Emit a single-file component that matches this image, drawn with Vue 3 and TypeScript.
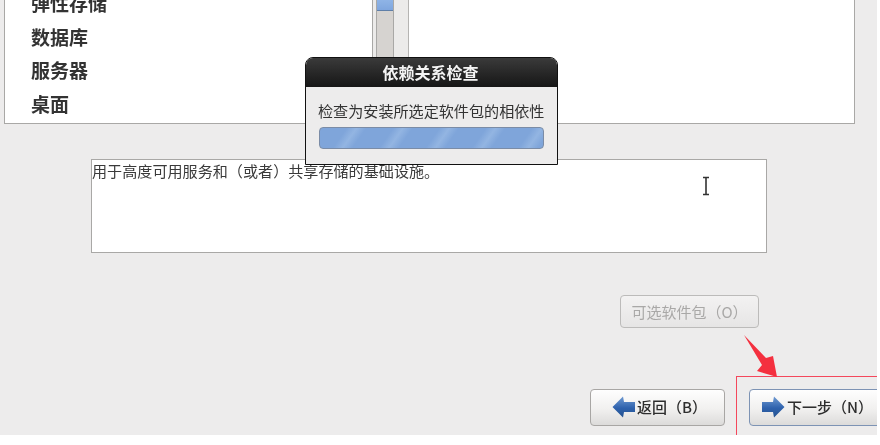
<script setup lang="ts">
const groups: string[] = ['弹性存储', '数据库', '服务器', '桌面']
</script>

<template>
  <div class="page">
    <div class="stage">
      <section class="browser">
        <ul class="groups">
          <li v-for="g in groups" :key="g" class="group">{{ g }}</li>
        </ul>
        <div class="scrollbar">
          <div class="gutter"></div>
          <div class="trough"><div class="thumb"></div></div>
        </div>
        <div class="details"></div>
      </section>

      <div class="description">用于高度可用服务和（或者）共享存储的基础设施。</div>

      <button class="btn optional" disabled>可选软件包（O）</button>

      <nav class="nav">
        <button class="btn nav-btn">
          <svg class="icon" width="24" height="22" viewBox="0 0 24 22">
            <defs>
              <linearGradient id="ab" x1="0" y1="0" x2="0" y2="1">
                <stop offset="0" stop-color="#6f9ad2" />
                <stop offset="0.55" stop-color="#2f62ad" />
                <stop offset="1" stop-color="#24528f" />
              </linearGradient>
            </defs>
            <path d="M0.5 11 L11 0.5 L12 6 L23 6 L23 16 L12 16 L11 21.5 Z" fill="url(#ab)" />
          </svg>
          <span>返回（B）</span>
        </button>
        <button class="btn nav-btn next">
          <svg class="icon" width="24" height="22" viewBox="0 0 24 22">
            <defs>
              <linearGradient id="an" x1="0" y1="0" x2="0" y2="1">
                <stop offset="0" stop-color="#6f9ad2" />
                <stop offset="0.55" stop-color="#2f62ad" />
                <stop offset="1" stop-color="#24528f" />
              </linearGradient>
            </defs>
            <path d="M23.5 11 L13 0.5 L12 6 L1 6 L1 16 L12 16 L13 21.5 Z" fill="url(#an)" />
          </svg>
          <span>下一步（N）</span>
        </button>
      </nav>

      <div class="dialog">
        <div class="dialog-title">依赖关系检查</div>
        <div class="dialog-body">
          <p class="dialog-text">检查为安装所选定软件包的相依性</p>
          <div class="progress"></div>
        </div>
      </div>

      <svg class="ibeam" width="10" height="20" viewBox="0 0 10 20">
        <path d="M2 1.5 H8 M5 1.5 V18.5 M2 18.5 H8" stroke="#333" stroke-width="1.6" fill="none" />
      </svg>

      <div class="highlight"></div>
      <svg class="pointer" width="44" height="50" viewBox="0 0 44 50">
        <path d="M2 1 L24 24 L31 22 L35 43 L15 37 L20 31 Z" fill="#f4303f" />
      </svg>
    </div>
  </div>
</template>

<style scoped>
.page {
  width: 880px;
  height: 445px;
  background: #fff;
  overflow: hidden;
}
.stage {
  position: relative;
  width: 877px;
  height: 435px;
  background: #edecec;
  overflow: hidden;
  font-family: "Noto Sans CJK SC", "Liberation Sans", sans-serif;
  color: #2e2e2e;
  filter: blur(0.35px);
}
.browser {
  display: flex;
  width: 851px;
  height: 124px;
  margin-left: 4px;
  box-sizing: border-box;
  border: 1px solid #a9a8a6;
  border-top: none;
  background: #fff;
}
.groups {
  width: 367px;
  margin: -14px 0 0;
  padding: 0 0 0 26px;
  box-sizing: border-box;
  list-style: none;
}
.group {
  height: 33.5px;
  line-height: 33.5px;
  font-size: 19px;
  font-weight: 700;
  color: #333;
}
.scrollbar {
  display: flex;
  width: 37px;
  box-sizing: border-box;
  background: #ecebea;
  border-left: 1px solid #a9a8a6;
  border-right: 1px solid #b5b4b2;
}
.gutter {
  width: 3px;
}
.trough {
  width: 18px;
  box-sizing: border-box;
  background: #d6d3d0;
  border: 1px solid #a9a8a6;
  border-top: none;
  border-bottom: none;
}
.thumb {
  height: 10px;
  background: linear-gradient(#8fb4e6, #7fa6de);
  border-bottom: 1px solid #5f7fa8;
}
.details {
  flex: 1;
}
.description {
  width: 676px;
  height: 94px;
  margin: 35px 0 0 91px;
  box-sizing: border-box;
  background: #fff;
  border: 1px solid #a9a8a6;
  font-size: 15.1px;
  line-height: 20px;
  color: #3a3a3a;
  white-space: nowrap;
}
.btn {
  display: flex;
  align-items: center;
  box-sizing: border-box;
  padding: 0;
  border: 1px solid #a8a6a4;
  border-radius: 4px;
  background: linear-gradient(#fefefe, #f1f0ef 55%, #dcdbda);
  font-family: inherit;
  color: #2e2e2e;
  white-space: nowrap;
}
.optional {
  justify-content: center;
  width: 139px;
  height: 33px;
  margin: 42px 0 0 620px;
  font-size: 15px;
  color: #a9a8a7;
  background: linear-gradient(#f3f2f2, #e6e5e5);
  border-color: #bcbbba;
}
.nav {
  display: flex;
  gap: 24px;
  margin: 61px 0 0 590px;
}
.nav-btn {
  flex: none;
  width: 135px;
  height: 37px;
  padding-left: 21px;
  padding-bottom: 2px;
  font-size: 15px;
  font-weight: 500;
  gap: 1px;
}
.next {
  padding-left: 11px;
  gap: 2px;
  border-color: #7d93b4;
}
.icon {
  flex: none;
}
.dialog {
  position: absolute;
  left: 305px;
  top: 57px;
  width: 253px;
  height: 108px;
  box-sizing: border-box;
  border: 1px solid #111;
  border-radius: 8px 8px 0 0;
  background: #edecec;
  overflow: hidden;
}
.dialog-title {
  height: 29px;
  line-height: 28px;
  text-align: center;
  font-size: 16px;
  font-weight: 700;
  color: #f4f4f4;
  background: linear-gradient(#3a3a3a, #161616);
  padding-right: 2px;
}
.dialog-body {
  padding: 13px 13px 0 12px;
}
.dialog-text {
  margin: 0;
  font-size: 15.1px;
  line-height: 20px;
  color: #333;
  white-space: nowrap;
}
.progress {
  height: 22px;
  margin: 7px 0 0 1px;
  box-sizing: border-box;
  border: 1px solid #7b8ca6;
  border-radius: 4px;
  background: repeating-linear-gradient(
    125deg,
    #7fa5da 0,
    #7fa5da 22px,
    #93b5e2 30px,
    #7fa5da 38px
  );
}
.ibeam {
  position: absolute;
  left: 701px;
  top: 176px;
}
.highlight {
  position: absolute;
  left: 736px;
  top: 376px;
  width: 160px;
  height: 80px;
  border: 1px solid #f4475c;
}
.pointer {
  position: absolute;
  left: 742px;
  top: 334px;
}
</style>

<style>
html, body { margin: 0; background: #fff; }
</style>
